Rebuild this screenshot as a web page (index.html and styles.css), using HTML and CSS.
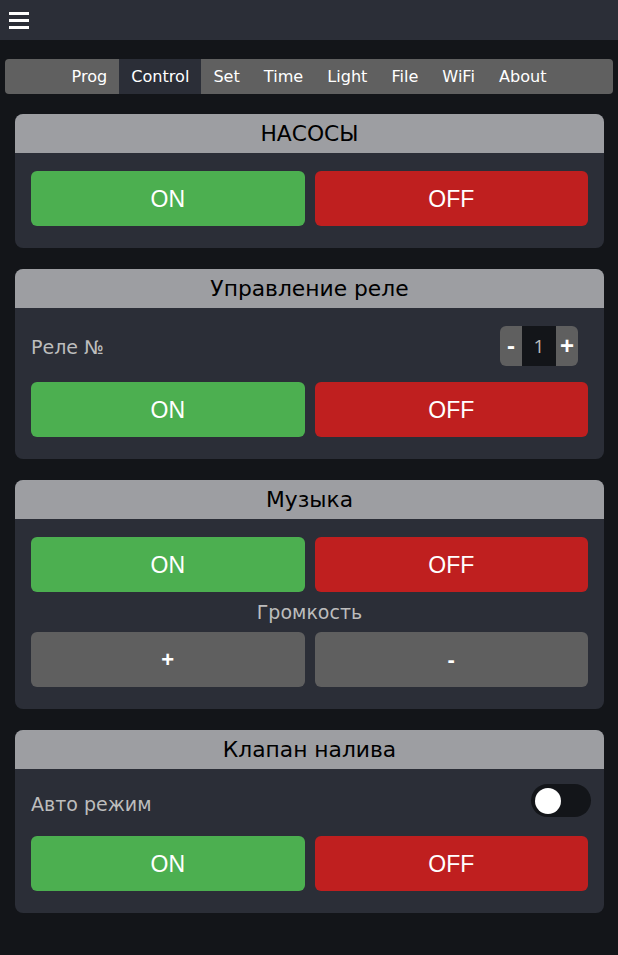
FILE: index.html
```html
<!DOCTYPE html>
<html lang="ru">
<head>
<meta charset="utf-8">
<title>Control</title>
<link rel="stylesheet" href="styles.css">
</head>
<body>
<header class="topbar">
  <div class="burger"><span></span><span></span><span></span></div>
</header>
<nav class="tabs">
  <a class="tab">Prog</a>
  <a class="tab active">Control</a>
  <a class="tab">Set</a>
  <a class="tab">Time</a>
  <a class="tab">Light</a>
  <a class="tab">File</a>
  <a class="tab">WiFi</a>
  <a class="tab">About</a>
</nav>
<main class="content">
  <section class="card">
    <div class="card-head">НАСОСЫ</div>
    <div class="card-body">
      <div class="btn-row">
        <button class="btn on">ON</button>
        <button class="btn off">OFF</button>
      </div>
    </div>
  </section>
  <section class="card">
    <div class="card-head">Управление реле</div>
    <div class="card-body">
      <div class="row">
        <span class="label">Реле №</span>
        <div class="stepper"><span class="st-btn">-</span><span class="st-val">1</span><span class="st-btn">+</span></div>
      </div>
      <div class="btn-row">
        <button class="btn on">ON</button>
        <button class="btn off">OFF</button>
      </div>
    </div>
  </section>
  <section class="card">
    <div class="card-head">Музыка</div>
    <div class="card-body">
      <div class="btn-row">
        <button class="btn on">ON</button>
        <button class="btn off">OFF</button>
      </div>
      <div class="center-label">Громкость</div>
      <div class="btn-row">
        <button class="btn grey">+</button>
        <button class="btn grey">-</button>
      </div>
    </div>
  </section>
  <section class="card">
    <div class="card-head">Клапан налива</div>
    <div class="card-body">
      <div class="row row-toggle">
        <span class="label label-low">Авто режим</span>
        <span class="toggle"><span class="knob"></span></span>
      </div>
      <div class="btn-row">
        <button class="btn on">ON</button>
        <button class="btn off">OFF</button>
      </div>
    </div>
  </section>
</main>
</body>
</html>
```
FILE: styles.css
```css
html, body {
  margin: 0;
  padding: 0;
  background: #131519;
  font-family: "DejaVu Sans", Verdana, sans-serif;
}
.topbar {
  height: 40px;
  background: #2b2e37;
  display: flex;
  align-items: center;
  padding-left: 9px;
}
.burger {
  display: flex;
  flex-direction: column;
  gap: 4px;
  width: 20px;
}
.burger span {
  display: block;
  height: 3px;
  background: #fff;
}
.tabs {
  margin: 19px 5px 0;
  height: 35px;
  background: #606060;
  border-radius: 4px;
  display: flex;
  justify-content: center;
  align-items: stretch;
}
.tab {
  display: flex;
  align-items: center;
  padding: 0 12px;
  color: #fff;
  font-size: 16.1px;
}
.tab.active {
  background: #2b2e37;
}
.content {
  padding: 20px 14px 0 15px;
  display: flex;
  flex-direction: column;
  gap: 21px;
}
.card {
  background: #2b2e37;
  border-radius: 8px;
  overflow: hidden;
}
.card-head {
  height: 39px;
  background: #9d9ea2;
  color: #000;
  font-size: 21.8px;
  display: flex;
  align-items: center;
  justify-content: center;
}
.card-body {
  padding: 18px 16px 22px;
  display: flex;
  flex-direction: column;
}
.btn-row {
  display: grid;
  grid-template-columns: 1fr 1fr;
  gap: 10px;
}
.btn {
  height: 55px;
  border: none;
  border-radius: 6px;
  color: #fff;
  font-family: "Liberation Sans", Arial, sans-serif;
  font-size: 23px;
  padding: 1px 0 0;
}
.btn.on { background: #4caf50; }
.btn.off { background: #bf1f1f; }
.btn.grey { background: #5f5f5f; font-size: 22px; font-weight: bold; }
.row {
  display: flex;
  justify-content: space-between;
  align-items: center;
  height: 40px;
  margin-bottom: 16px;
}
.row-toggle {
  height: 33px;
  margin-top: -3px;
  margin-right: -3px;
  margin-bottom: 19px;
}
.label {
  color: #bdbdbd;
  font-size: 19px;
  padding-top: 1px;
}
.label.label-low {
  padding-top: 6px;
}
.stepper {
  display: flex;
  height: 40px;
  border-radius: 6px;
  overflow: hidden;
  margin-right: 10px;
}
.st-btn {
  width: 22px;
  background: #5f5f5f;
  color: #fff;
  font-size: 24px;
  font-weight: bold;
  display: flex;
  align-items: center;
  justify-content: center;
  font-family: "Liberation Sans", sans-serif;
}
.st-val {
  width: 34px;
  background: #131519;
  color: #bdbdbd;
  font-size: 19px;
  display: flex;
  align-items: center;
  justify-content: center;
  font-family: "Open Sans", sans-serif;
}
.center-label {
  text-align: center;
  color: #bdbdbd;
  font-size: 19px;
  height: 40px;
  display: flex;
  align-items: center;
  justify-content: center;
}
.toggle {
  width: 60px;
  height: 33px;
  border-radius: 17px;
  background: #131519;
  display: flex;
  align-items: center;
  padding-left: 4px;
  box-sizing: border-box;
}
.knob {
  width: 26px;
  height: 26px;
  border-radius: 50%;
  background: #fff;
}
```
